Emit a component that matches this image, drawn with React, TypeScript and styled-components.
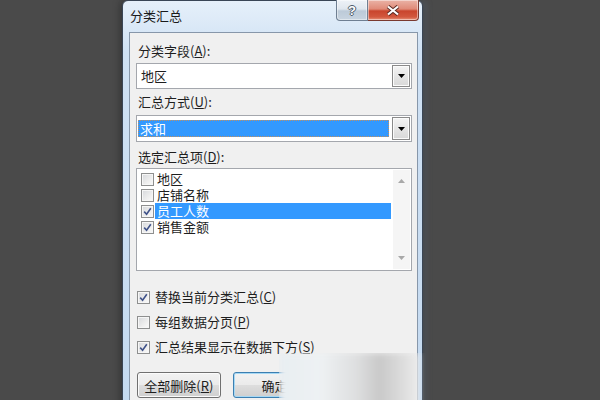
import * as React from "react";
import styled, { createGlobalStyle } from "styled-components";

const GlobalStyle = createGlobalStyle`
  html, body {
    margin: 0;
    padding: 0;
  }
  body {
    background: #4a4a4a;
    width: 600px;
    height: 400px;
    overflow: hidden;
    font-family: "Noto Sans CJK SC", "Noto Sans", sans-serif;
  }
`;

const Stage = styled.div`
  width: 600px;
  height: 400px;
  overflow: hidden;
  display: flex;
  padding-left: 122px;
  box-sizing: border-box;
  background: #4a4a4a;
`;

const Window = styled.div`
  position: relative;
  width: 301px;
  height: 430px;
  box-sizing: border-box;
  border: 1px solid #3a4656;
  border-radius: 6px 6px 0 0;
  background: linear-gradient(to bottom, #e6f0fa 0%, #cfe1f4 12%, #c3d9f0 100%);
  padding: 0 4px 0 6px;
  display: flex;
  flex-direction: column;
  box-shadow: 0 0 9px rgba(0, 0, 0, 0.5), 3px 0 6px rgba(140, 160, 185, 0.35);
`;

const TitleBar = styled.div`
  height: 31px;
  display: flex;
  align-items: flex-start;
`;

const Title = styled.div`
  padding: 7px 0 0 1px;
  font-size: 13px;
  line-height: 16px;
  color: #1a1a1a;
`;

const CaptionButtons = styled.div`
  margin: -1px -1px 0 auto;
  display: flex;
`;

const CaptionButton = styled.div<{ $w: number; $close?: boolean }>`
  width: ${(p) => p.$w}px;
  height: 21px;
  box-sizing: border-box;
  display: flex;
  align-items: center;
  justify-content: center;
  border: 1px solid ${(p) => (p.$close ? "#7a3a30" : "#6f7f92")};
  border-top: none;
  border-left: ${(p) => (p.$close ? "none" : undefined)};
  border-radius: ${(p) => (p.$close ? "0 0 4px 0" : "0 0 0 4px")};
  background: ${(p) =>
    p.$close
      ? "linear-gradient(to bottom, #eab3a6 0%, #e08a78 45%, #c9452d 55%, #d2583e 85%, #e8957c 100%)"
      : "linear-gradient(to bottom, #eef2f7 0%, #dfe6ee 45%, #bccad8 55%, #c8d4e0 100%)"};
  box-shadow: inset 0 0 0 1px rgba(255, 255, 255, 0.45);
`;

const HelpGlyph = styled.span`
  font-family: "Liberation Sans", Arial, sans-serif;
  font-weight: bold;
  font-size: 13px;
  line-height: 13px;
  color: #ffffff;
  text-shadow: -1px 0 #4d5b6b, 1px 0 #4d5b6b, 0 -1px #4d5b6b, 0 1px #4d5b6b;
`;

const Client = styled.div`
  flex: 1;
  background: #f0f0f0;
  border: 1px solid #8797aa;
  border-bottom: none;
  padding: 10px 5px 0 6px;
  display: flex;
  flex-direction: column;
`;

const Label = styled.div<{ $mt?: number }>`
  margin-top: ${(p) => p.$mt ?? 0}px;
  padding-left: 2px;
  font-size: 13px;
  line-height: 16px;
  color: #1e1e1e;
  white-space: nowrap;
`;

const Combo = styled.div<{ $h: number; $mt: number }>`
  margin-top: ${(p) => p.$mt}px;
  height: ${(p) => p.$h}px;
  box-sizing: border-box;
  border: 1px solid #a4a7ad;
  background: #ffffff;
  display: flex;
  align-items: stretch;
`;

const ComboValue = styled.div<{ $selected?: boolean }>`
  flex: 1;
  display: flex;
  align-items: center;
  font-size: 13px;
  line-height: 16px;
  color: ${(p) => (p.$selected ? "#ffffff" : "#1e1e1e")};
  padding-left: ${(p) => (p.$selected ? 2 : 4)}px;
  margin: ${(p) => (p.$selected ? "4px 2px 4px 1px" : "0")};
  background: ${(p) => (p.$selected ? "#3399ff" : "transparent")};
  outline: ${(p) => (p.$selected ? "1px dotted #c49060" : "none")};
  outline-offset: -1px;
`;

const DropButton = styled.div`
  width: 18px;
  margin: 1px;
  box-sizing: border-box;
  border: 1px solid #8a8a8a;
  background: linear-gradient(to bottom, #f4f4f4 0%, #e6e6e6 50%, #d8d8d8 100%);
  box-shadow: inset 0 0 0 1px #fbfbfb;
  display: flex;
  align-items: center;
  justify-content: center;
`;

const ListBox = styled.div`
  margin-top: 3px;
  height: 103px;
  box-sizing: border-box;
  border: 1px solid #a4a7ad;
  background: #ffffff;
  display: flex;
`;

const ListItems = styled.div`
  flex: 1;
  padding-top: 2px;
  display: flex;
  flex-direction: column;
`;

const ListItem = styled.div`
  height: 16px;
  display: flex;
  align-items: center;
  padding-left: 4px;
`;

const ItemText = styled.div<{ $selected?: boolean }>`
  flex: 1;
  margin: 0 1px 0 1px;
  padding-left: 2px;
  height: 16px;
  font-size: 13px;
  line-height: 16px;
  color: ${(p) => (p.$selected ? "#ffffff" : "#1e1e1e")};
  background: ${(p) => (p.$selected ? "#3399ff" : "transparent")};
`;

const ScrollBar = styled.div`
  width: 17px;
  margin: 1px;
  background: #f5f5f5;
  display: flex;
  flex-direction: column;
  align-items: center;
  justify-content: space-between;
  padding: 9px 0 9px;
  box-sizing: border-box;
`;

const CheckBoxFrame = styled.span`
  width: 13px;
  height: 13px;
  box-sizing: border-box;
  flex-shrink: 0;
  border: 1px solid #8e8f8f;
  background: linear-gradient(135deg, #d6d8db 0%, #eeeeee 60%, #fbfbfb 100%);
  box-shadow: inset 0 0 0 1px #f6f6f6;
  display: inline-flex;
  align-items: center;
  justify-content: center;
`;

const OptionRow = styled.div<{ $mt: number }>`
  margin-top: ${(p) => p.$mt}px;
  height: 16px;
  padding-left: 1px;
  display: flex;
  align-items: center;
  gap: 5px;
  font-size: 13px;
  line-height: 16px;
  color: #1e1e1e;
  white-space: nowrap;
`;

const ButtonRow = styled.div`
  margin-top: 17px;
  padding-left: 1px;
  display: flex;
  gap: 12px;
`;

const PushButton = styled.div<{ $default?: boolean }>`
  width: 88px;
  height: 26px;
  box-sizing: border-box;
  border: 1px solid ${(p) => (p.$default ? "#3c7fb1" : "#707070")};
  border-radius: 3px;
  background: linear-gradient(to bottom, #f2f2f2 0%, #ebebeb 48%, #dddddd 52%, #cfcfcf 100%);
  box-shadow: inset 0 0 0 1px ${(p) => (p.$default ? "#a6d8f4" : "#fbfbfb")};
  display: flex;
  align-items: center;
  justify-content: center;
  font-size: 13px;
  color: #1e1e1e;
  white-space: nowrap;
`;

const Smudge = styled.div`
  position: absolute;
  left: 156px;
  top: 352px;
  width: 140px;
  height: 70px;
  background: linear-gradient(
    90deg,
    #e8eef2 0%,
    #eef1f3 30%,
    #dedfe0 55%,
    #c9c9c9 72%,
    #dcdcdc 88%,
    #ececec 100%
  );
  filter: blur(3px);
  clip-path: inset(0 -10px -10px 0);
`;

const ArrowDown = ({ color = "#000" }: { color?: string }) => (
  <svg width="7" height="4" viewBox="0 0 7 4">
    <path d="M0 0 H7 L3.5 4 Z" fill={color} />
  </svg>
);

const ArrowUp = ({ color = "#000" }: { color?: string }) => (
  <svg width="7" height="4" viewBox="0 0 7 4">
    <path d="M0 4 H7 L3.5 0 Z" fill={color} />
  </svg>
);

const CheckBox = ({ checked }: { checked?: boolean }) => (
  <CheckBoxFrame>
    {checked && (
      <svg width="9" height="9" viewBox="0 0 9 9">
        <path
          d="M1.2 4.6 L3.6 7.2 L7.8 1.2"
          fill="none"
          stroke="#3f5289"
          strokeWidth="1.6"
        />
      </svg>
    )}
  </CheckBoxFrame>
);

const CloseIcon = () => (
  <svg width="14" height="11" viewBox="0 0 14 11">
    <path d="M2 1.5 L12 9.5 M12 1.5 L2 9.5" stroke="#5a2a22" strokeWidth="4" />
    <path d="M2 1.5 L12 9.5 M12 1.5 L2 9.5" stroke="#ffffff" strokeWidth="2.2" />
  </svg>
);

const items = [
  { name: "地区", checked: false, selected: false },
  { name: "店铺名称", checked: false, selected: false },
  { name: "员工人数", checked: true, selected: true },
  { name: "销售金额", checked: true, selected: false },
];

const options = [
  { text: "替换当前分类汇总(", key: "C", checked: true, mt: 18 },
  { text: "每组数据分页(", key: "P", checked: false, mt: 9 },
  { text: "汇总结果显示在数据下方(", key: "S", checked: true, mt: 9 },
];

export default function App() {
  return (
    <Stage>
      <GlobalStyle />
      <Window>
        <TitleBar>
          <Title>分类汇总</Title>
          <CaptionButtons>
            <CaptionButton $w={32}>
              <HelpGlyph>?</HelpGlyph>
            </CaptionButton>
            <CaptionButton $w={51} $close>
              <CloseIcon />
            </CaptionButton>
          </CaptionButtons>
        </TitleBar>
        <Client>
          <Label>
            分类字段(<u>A</u>):
          </Label>
          <Combo $h={26} $mt={4}>
            <ComboValue>地区</ComboValue>
            <DropButton>
              <ArrowDown />
            </DropButton>
          </Combo>
          <Label $mt={5}>
            汇总方式(<u>U</u>):
          </Label>
          <Combo $h={27} $mt={5}>
            <ComboValue $selected>求和</ComboValue>
            <DropButton>
              <ArrowDown />
            </DropButton>
          </Combo>
          <Label $mt={7}>
            选定汇总项(<u>D</u>):
          </Label>
          <ListBox>
            <ListItems>
              {items.map((it) => (
                <ListItem key={it.name}>
                  <CheckBox checked={it.checked} />
                  <ItemText $selected={it.selected}>{it.name}</ItemText>
                </ListItem>
              ))}
            </ListItems>
            <ScrollBar>
              <ArrowUp color="#a8a8a8" />
              <ArrowDown color="#a8a8a8" />
            </ScrollBar>
          </ListBox>
          {options.map((o) => (
            <OptionRow key={o.key} $mt={o.mt}>
              <CheckBox checked={o.checked} />
              <span>
                {o.text}
                <u>{o.key}</u>)
              </span>
            </OptionRow>
          ))}
          <ButtonRow>
            <PushButton>
              全部删除(<u>R</u>)
            </PushButton>
            <PushButton $default>确定</PushButton>
            <PushButton>取消</PushButton>
          </ButtonRow>
        </Client>
        <Smudge />
      </Window>
    </Stage>
  );
}
